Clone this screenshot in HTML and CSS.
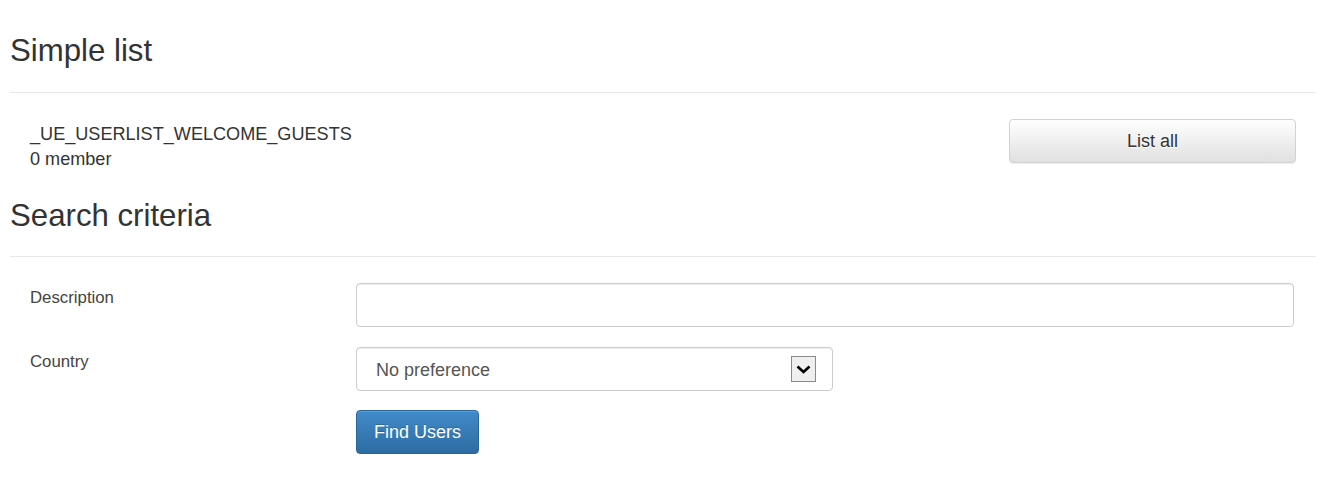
FILE: index.html
```html
<!DOCTYPE html>
<html lang="en">
<head>
<meta charset="utf-8">
<title>Simple list</title>
<link rel="stylesheet" href="styles.css">
</head>
<body>
<div class="page">
  <div class="page-header first">
    <h2 class="title">Simple list</h2>
  </div>
  <div class="list-row">
    <div class="list-info">
      <div>_UE_USERLIST_WELCOME_GUESTS</div>
      <div>0 member</div>
    </div>
    <button class="btn btn-default" type="button">List all</button>
  </div>
  <div class="page-header second">
    <h2 class="title">Search criteria</h2>
  </div>
  <form class="search-form">
    <div class="form-group">
      <label class="control-label" for="desc">Description</label>
      <input class="form-control" id="desc" type="text">
    </div>
    <div class="form-group">
      <label class="control-label" for="country">Country</label>
      <div class="select-wrap">
        <select id="country" class="select-control">
          <option>No preference</option>
        </select>
        <span class="select-arrow"><svg width="15" height="9" viewBox="0 0 15 9"><polyline points="1.5,1.5 7.5,7 13.5,1.5" fill="none" stroke="#000" stroke-width="2.6"/></svg></span>
      </div>
    </div>
    <div class="form-group">
      <span></span>
      <div><button class="btn btn-primary" type="button">Find Users</button></div>
    </div>
  </form>
</div>
</body>
</html>
```
FILE: styles.css
```css
html, body {
  margin: 0;
  padding: 0;
  background: #fff;
}
body {
  font-family: "Liberation Sans", Arial, Helvetica, sans-serif;
  color: #333;
  font-size: 18px;
  line-height: 25px;
}
.page {
  padding: 0 10px;
}
.page-header {
  border-bottom: 1px solid #e8e8e8;
}
.page-header.first {
  padding: 34px 0 25px;
}
.page-header.second {
  padding: 29px 0 24px;
}
.title {
  margin: 0;
  font-size: 31.2px;
  line-height: 33px;
  font-weight: normal;
  color: #333;
}
.list-row {
  display: flex;
  justify-content: space-between;
  align-items: flex-start;
  padding: 26px 20px 0 20px;
}
.list-info {
  padding-top: 3px;
  margin-bottom: -2px;
  font-size: 18.1px;
}
.btn {
  box-sizing: border-box;
  font-family: inherit;
  font-size: 18px;
  height: 44px;
  padding-top: 2px;
  border-radius: 4px;
  border: 1px solid transparent;
  cursor: pointer;
  display: inline-flex;
  align-items: center;
  justify-content: center;
  margin: 0;
}
.btn-default {
  width: 287px;
  color: #333;
  background: linear-gradient(to bottom, #ffffff 0%, #e0e0e0 100%);
  border-color: #d2d2d2;
  text-shadow: 0 1px 0 #fff;
  box-shadow: inset 0 1px 0 rgba(255,255,255,.15), 0 1px 1px rgba(0,0,0,.075);
}
.btn-primary {
  padding-left: 17px;
  padding-right: 17px;
  color: #fff;
  background: linear-gradient(to bottom, #428bca 0%, #2d6ca2 100%);
  border-color: #2b669a;
  text-shadow: 0 -1px 0 rgba(0,0,0,.2);
  box-shadow: inset 0 1px 0 rgba(255,255,255,.15), 0 1px 1px rgba(0,0,0,.075);
}
.search-form {
  padding: 26px 22px 0 20px;
  display: flex;
  flex-direction: column;
  gap: 20px;
}
.form-group {
  display: grid;
  grid-template-columns: 326px 1fr;
  align-items: start;
}
.form-group:last-child {
  margin-top: -1px;
}
.control-label {
  font-size: 16.8px;
  line-height: 24px;
  padding-top: 3px;
  color: #444;
}
.form-control {
  box-sizing: border-box;
  width: 100%;
  height: 44px;
  margin: 0;
  border: 1px solid #cccccc;
  border-radius: 4px;
  box-shadow: inset 0 1px 1px rgba(0,0,0,.075);
  font-family: inherit;
  font-size: 18px;
  padding: 0 19px;
  color: #555;
}
.select-wrap {
  box-sizing: border-box;
  width: 477px;
  height: 44px;
  border: 1px solid #cccccc;
  border-radius: 4px;
  box-shadow: inset 0 1px 1px rgba(0,0,0,.075);
  display: flex;
  align-items: center;
  padding: 0 16px 0 19px;
  background: #fff;
}
.select-control {
  flex: 1;
  appearance: none;
  -webkit-appearance: none;
  border: none;
  background: transparent;
  font-family: inherit;
  font-size: 18px;
  color: #555;
  padding: 2px 0 0;
  margin: 0;
  height: 28px;
  outline: none;
}
.select-arrow {
  box-sizing: border-box;
  width: 25px;
  height: 26px;
  background: #efefef;
  border: 1px solid #8a8a8a;
  display: flex;
  align-items: center;
  justify-content: center;
}
```
